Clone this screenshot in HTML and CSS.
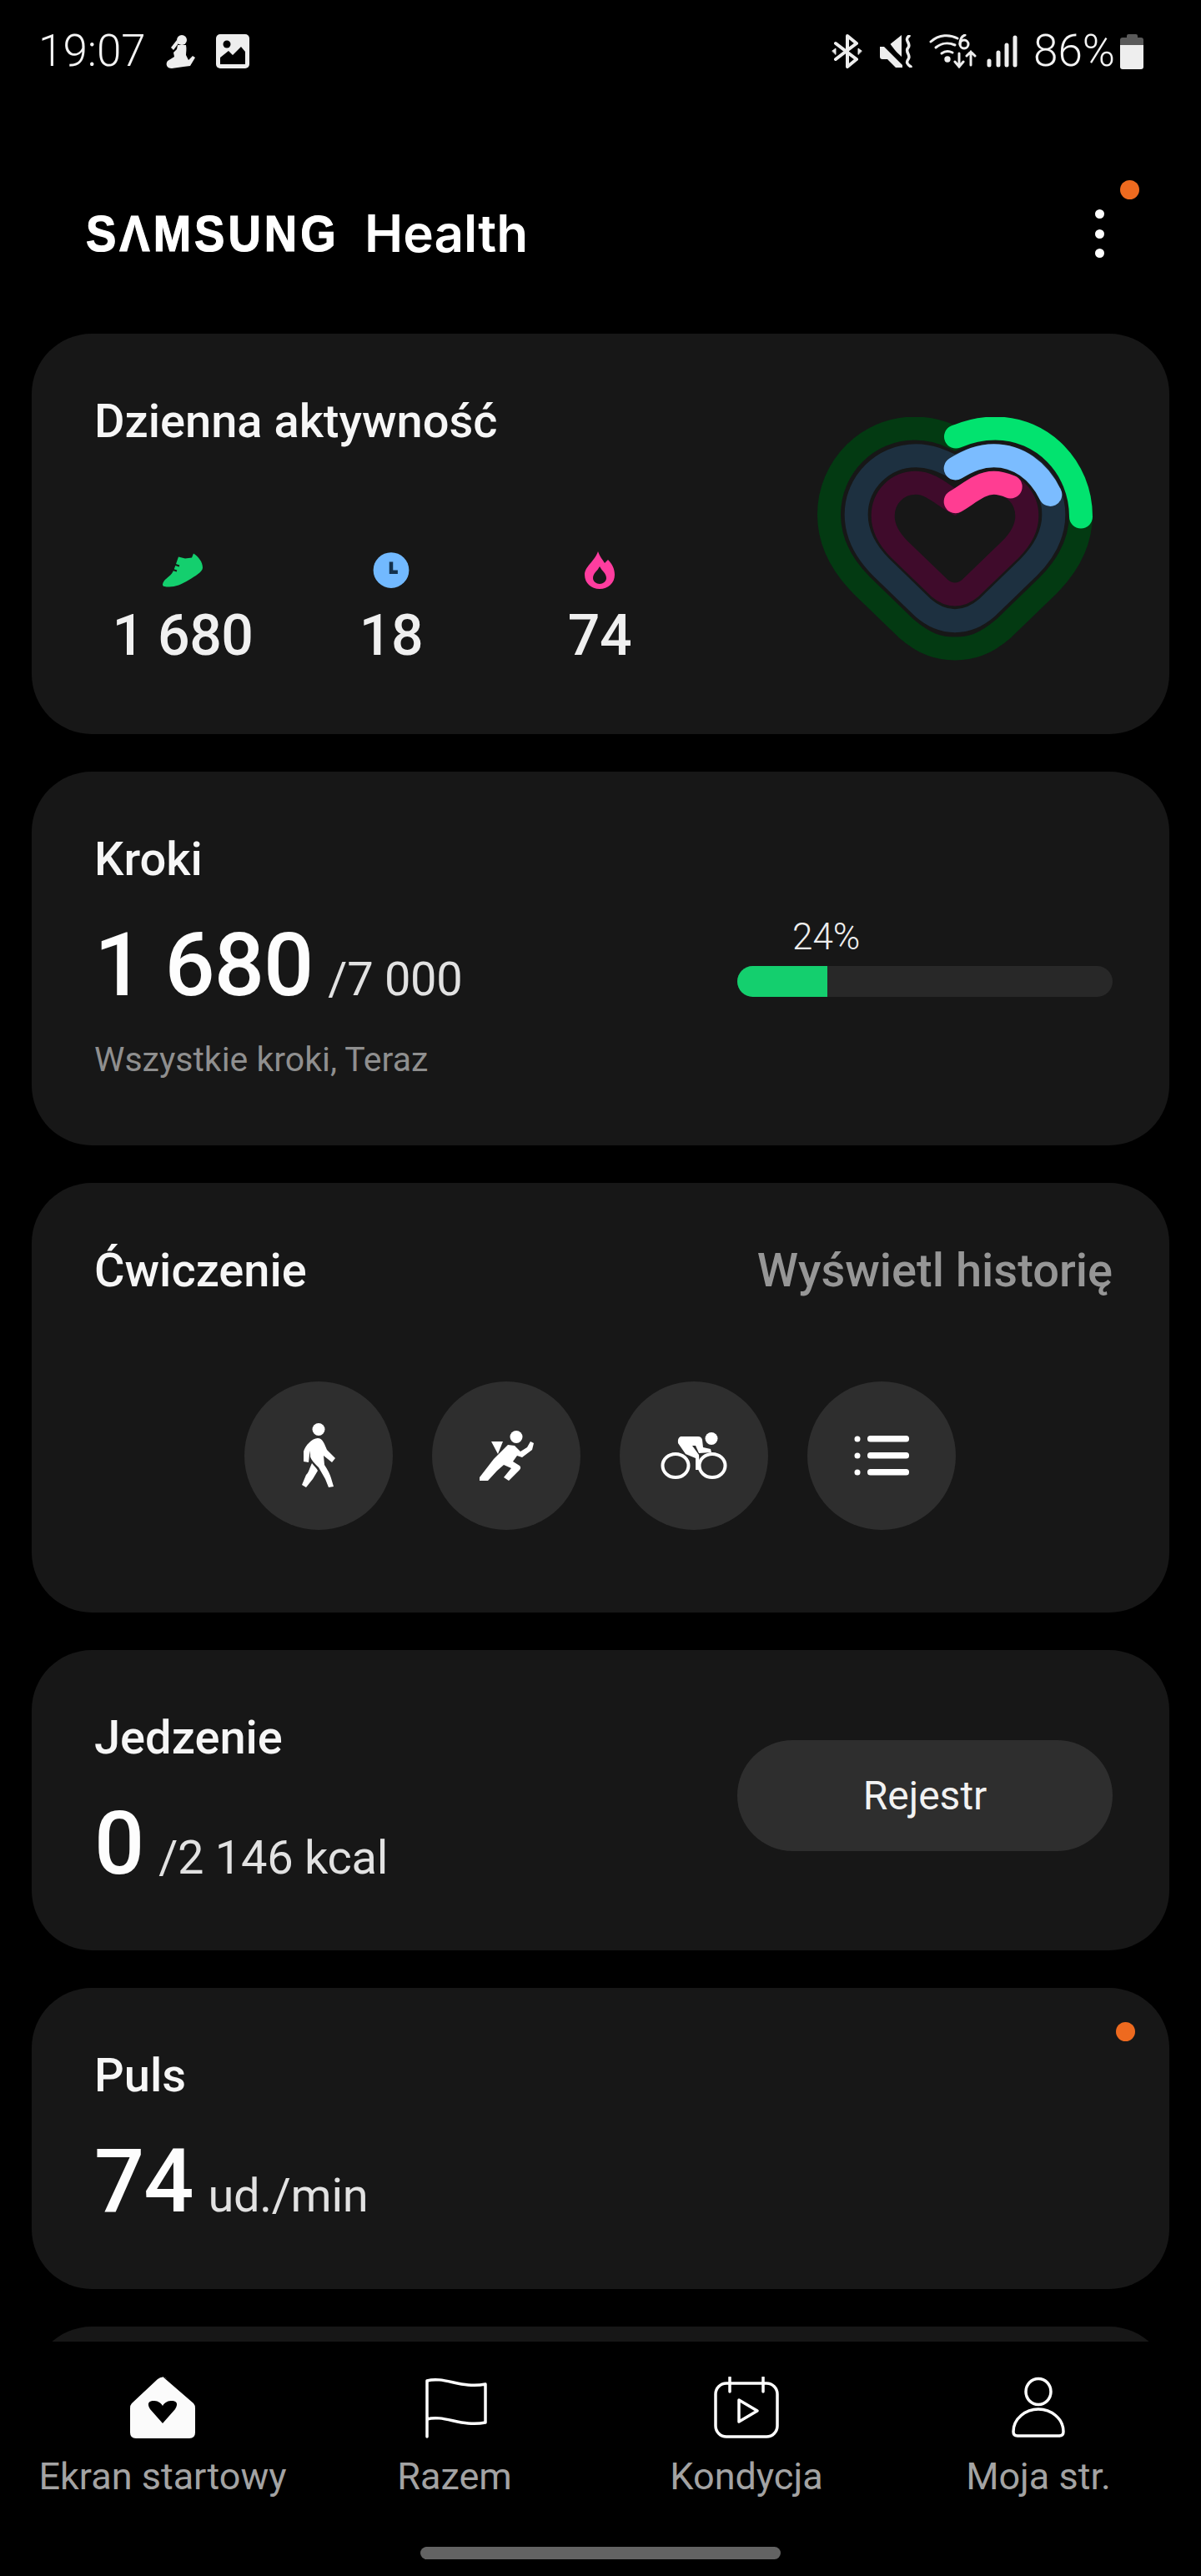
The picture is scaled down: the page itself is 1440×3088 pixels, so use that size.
FILE: index.html
```html
<html>
<head>
<meta charset="utf-8">
<link rel="stylesheet" href="styles.css">
</head>
<body>
<div id="ekran">
    <div class="status">
        <div class="status-lewa">
            <span class="czas">19:07</span>
            <svg class="st-figura" viewBox="0 0 37 41"><circle cx="20" cy="7" r="6" fill="#eee"/><path d="M15 13 L25 13 C26 18 25 21 25 25 L28 31 L33 26 L36 28 L30 38 L22 39 L8 41 C2 41 0 36 3 32 L11 27 L10 22 L14 18Z" fill="#eee"/><path d="M14 7 L7 16 L10 19 L16 11Z" fill="#eee"/></svg>
            <svg class="st-obraz" viewBox="0 0 40 41"><rect width="40" height="41" rx="5" fill="#eee"/><path d="M5 36 V28 L15 20 L20 25 L30 15 L35 21 V36Z" fill="#000"/><circle cx="13" cy="12" r="4.5" fill="#000"/></svg>
        </div>
        <div class="status-prawa">
            <svg class="st-bt" viewBox="0 0 37 43" fill="none" stroke="#eee" stroke-width="4" stroke-linejoin="round" stroke-linecap="round"><path d="M5 12 L30 31 L19 40 V3 L30 12 L5 31"/><path d="M1 21 L5 18 V25Z M36 21 L32 18 V25Z" fill="#eee" stroke-width="1"/></svg>
            <svg class="st-mute" viewBox="0 0 39 39"><path d="M0 14 H5 L27 36 V39 L19 39 L9 29 H3 Q0 29 0 26Z M11 12 L26 0 V26Z" fill="#eee"/><path d="M3 1 L29 35" stroke="#000" stroke-width="3"/><path d="M35 1 C28 6 38 10 34 15 C29 20 38 24 34 29 C31 33 33 35 37 38" fill="none" stroke="#eee" stroke-width="3.5" stroke-linecap="round"/></svg>
            <svg class="st-wifi" viewBox="0 0 57 41" fill="none" stroke="#eee" stroke-width="3" stroke-linecap="round"><path d="M2 9 C12 0 25 0 34 5"/><path d="M8 16 C15 10 24 10 31 13"/><path d="M15 23 C19 20 24 20 28 22"/><circle cx="22" cy="30" r="2.2" fill="#eee"/><circle cx="42" cy="12" r="5"/><path d="M37 12 C37 5 40 2 43 1"/><path d="M36 23 V39 M31 33 L36 39 L41 33"/><path d="M50 37 V21 M45 26 L50 21 L55 26"/></svg>
            <svg class="st-zasieg" viewBox="0 0 37 39" stroke="#eee" stroke-width="5" stroke-linecap="round"><path d="M3 36 V31"/><path d="M14 36 V21"/><path d="M24 36 V12" /><path d="M34 36 V3"/></svg>
            <span class="procent">86%</span>
            <div class="bateria"><div class="bateria-kap"></div><div class="bateria-gora"></div><div class="bateria-dol"></div></div>
        </div>
    </div>

    <div class="naglowek">
        <div class="logo"><span class="logo-marka">SΛMSUNG</span><span class="logo-app">Health</span></div>
        <div class="menu"><i></i><i></i><i></i><b class="kropka kropka-menu"></b></div>
    </div>

    <div class="lista">
        <div class="karta karta-aktywnosc">
            <div class="aktywnosc-lewa">
                <div class="tytul">Dzienna aktywność</div>
                <div class="staty">
                    <div class="stat">
                        <svg class="ikona-stat" viewBox="0 0 50 40"><path d="M1 37 C2 31 8 29 12 24 C15 20 17 12 20 4 L28 6 L36 5 L38 0 C44 4 49 10 49 17 C49 22 40 27 32 32 C24 37 16 40 9 40 C4 40 1 40 1 37Z" fill="#14cf6e"/><path d="M15 13 L21 15 M12 19 L18 21" stroke="#181818" stroke-width="2"/></svg>
                        <div class="liczba">1 680</div>
                    </div>
                    <div class="stat">
                        <svg class="ikona-stat" viewBox="0 0 38 40"><circle cx="19" cy="20" r="19" fill="#72b9ff"/><path d="M19 11 V22 H26" fill="none" stroke="#12304d" stroke-width="4"/></svg>
                        <div class="liczba">18</div>
                    </div>
                    <div class="stat">
                        <svg class="ikona-stat" viewBox="0 0 36 45"><path d="M16 0 C18 6 21 9 24 14 L28 10 C33 15 36 21 36 28 C36 38 28 45 18 45 C8 45 0 38 0 28 C0 18 12 12 16 0Z" fill="#ff3d9f"/><path d="M18 18 C21 24 26 26 26 32 C26 36 22 39 18 39 C14 39 10 36 10 32 C10 26 15 24 18 18Z" fill="#181818"/></svg>
                        <div class="liczba">74</div>
                    </div>
                </div>
            </div>
            <svg class="serce" viewBox="120 90 990 875" fill="none" stroke-width="84" stroke-linecap="round">
                <!-- pierscienie: tlo i postep -->
                <path stroke="#033a12" d="M615 165 C665 140 710 130 760 130 C930 130 1068 270 1068 440 C1068 545 1015 630 950 695 L790 850 C720 910 670 922 615 922 C560 922 510 910 440 850 L280 695 C215 630 162 545 162 440 C162 270 300 130 470 130 C520 130 565 140 615 165Z"/>
                <path stroke="#1d3040" d="M615 270 C665 245 705 228 755 228 C875 228 970 325 970 440 C970 515 935 575 880 630 L730 775 C690 810 655 822 615 822 C575 822 540 810 500 775 L350 630 C295 575 260 515 260 440 C260 325 355 228 475 228 C525 228 565 245 615 270Z"/>
                <path stroke="#3f0b2b" d="M615 395 C665 365 705 326 755 326 C825 326 874 380 874 445 C874 490 850 530 815 565 L670 705 C650 722 635 727 615 727 C595 727 580 722 560 705 L415 565 C380 530 356 490 356 445 C356 380 405 326 475 326 C525 326 565 365 615 395Z"/>
                <path stroke="#02e36f" d="M618 160 C665 140 710 130 760 130 C930 130 1068 270 1068 448"/>
                <path stroke="#7bbcff" d="M617 274 C665 245 705 228 755 228 C840 228 915 280 958 368"/>
                <path stroke="#ff3d92" d="M617 393 C665 365 705 326 755 326 C775 326 795 332 815 340"/>
            </svg>
        </div>

        <div class="karta karta-kroki">
            <div>
                <div class="tytul">Kroki</div>
                <div class="wiersz"><span class="duza">1 680</span><span class="cel">/7 000</span></div>
                <div class="opis">Wszystkie kroki, Teraz</div>
            </div>
            <div class="postep">
                <div class="postep-proc">24%</div>
                <div class="postep-tor"><div class="postep-pasek" style="width: 24%"></div></div>
            </div>
        </div>

        <div class="karta karta-cwiczenie">
            <div class="cwiczenie-gora">
                <div class="tytul">Ćwiczenie</div>
                <div class="historia">Wyświetl historię</div>
            </div>
            <div class="kolka">
                <div class="kolko">
                    <svg class="ik-chod" viewBox="0 0 40 78" fill="#fff"><circle cx="20" cy="7.5" r="7.5"/><path d="M19 18 C23 18 25 21 27 25 L30 32 L40 42 L36 47 L26 39 L27 50 C31 56 34 62 35 66 L38 76 L32 77 L28 67 L20 53 C15 48 11 44 10 40 L10 33 L9 38 L8 47 L2 46 L2 34 C4 27 12 18 19 18Z"/><path d="M12 48 C15 52 18 54 19 57 L13 67 L5 77 L0 74 L5 62 C8 60 9 54 12 48Z"/></svg>
                </div>
                <div class="kolko">
                    <svg class="ik-bieg" viewBox="0 0 67 60" fill="#fff"><circle cx="45" cy="7.5" r="7.5"/><path d="M15 13 L29 13 L23 28Z"/><path d="M35 17 L43 18 L50 25 L58 20 L62 13 L66 15 L64 23 L52 32 L46 30 L41 37 L49 42 C51 44 50 46 49 47 L36 60 L30 56 L39 45 L30 41 L22 48 L11 60 L1 60 L1 56 L18 34Z"/></svg>
                </div>
                <div class="kolko">
                    <svg class="ik-rower" viewBox="0 0 80 56"><circle cx="61" cy="7.5" r="7.5" fill="#fff"/><path d="M24 5 H45 Q49 5 50 9 L51 18 L60 20 L61 24 L46 25 L42 16 H38 L46 27 L47 45 L42 45 L42 31 L30 26 L21 13 Q20 7 24 5Z" fill="#fff"/><g fill="none" stroke="#fff" stroke-width="4"><ellipse cx="18" cy="40" rx="15.5" ry="14"/><ellipse cx="62" cy="40" rx="15.5" ry="14"/></g></svg>
                </div>
                <div class="kolko">
                    <svg class="ik-lista" viewBox="0 0 66 48" fill="#fff"><circle cx="4" cy="4" r="3.5"/><rect x="16" y="0" width="50" height="7.5" rx="3.5"/><circle cx="4" cy="24" r="3.5"/><rect x="16" y="20" width="50" height="7.5" rx="3.5"/><circle cx="4" cy="44" r="3.5"/><rect x="16" y="40" width="50" height="7.5" rx="3.5"/></svg>
                </div>
            </div>
        </div>

        <div class="karta karta-jedzenie">
            <div>
                <div class="tytul">Jedzenie</div>
                <div class="wiersz"><span class="duza">0</span><span class="cel">/2 146 kcal</span></div>
            </div>
            <div class="rejestr">Rejestr</div>
        </div>

        <div class="karta karta-puls">
            <div class="tytul">Puls</div>
            <div class="wiersz"><span class="duza">74</span><span class="cel">ud./min</span></div>
            <b class="kropka kropka-puls"></b>
        </div>

        <div class="karta karta-nastepna"></div>
    </div>

    <div class="nawigacja">
        <div class="zakladka">
            <svg class="ikona-nav" viewBox="0 0 78 74"><path d="M39 0 L76 32 Q78 34 78 38 V67 Q78 74 71 74 H7 Q0 74 0 67 V38 Q0 34 2 32 L33 3 Q39 -2 45 3Z" fill="#fbfbfb"/><path d="M39 56 L24 39 C19 31 24 29 28 29 C32 29 36 30 39 35 C42 30 46 29 50 29 C54 29 59 31 54 39Z" fill="#000"/></svg>
            <div class="zakladka-tekst">Ekran startowy</div>
        </div>
        <div class="zakladka">
            <svg class="ikona-nav" viewBox="0 0 78 74" fill="none" stroke="#fff" stroke-width="3.5" stroke-linecap="round" stroke-linejoin="round"><path d="M6 72 V5 C26 -1 48 15 76 9 V55 C48 61 26 45 6 51"/></svg>
            <div class="zakladka-tekst">Razem</div>
        </div>
        <div class="zakladka">
            <svg class="ikona-nav" viewBox="0 0 78 74" fill="none" stroke="#fff" stroke-width="3.5" stroke-linecap="round" stroke-linejoin="round"><rect x="2" y="8" width="74" height="64" rx="13"/><path d="M19 1 V18 M59 1 V18"/><path d="M30 28 L52 41 L30 54Z"/></svg>
            <div class="zakladka-tekst">Kondycja</div>
        </div>
        <div class="zakladka">
            <svg class="ikona-nav" viewBox="0 0 78 74" fill="none" stroke="#fff" stroke-width="3.5" stroke-linecap="round" stroke-linejoin="round"><ellipse cx="39" cy="18" rx="15" ry="15.5"/><path d="M9 66 C9 50 24 39 39 39 C54 39 69 50 69 66 Q69 71 64 71 H14 Q9 71 9 66Z"/></svg>
            <div class="zakladka-tekst">Moja str.</div>
        </div>
    </div>
    <div class="pasek-dolny"></div>
</div>
</body>
</html>
```

FILE: styles.css
```css
* {
    box-sizing: border-box;
}

html, body {
    margin: 0;
    padding: 0;
    background-color: #000;
}

body {
    font-family: Roboto, "Liberation Sans", sans-serif;
    color: #f2f2f2;
}

#ekran {
    width: 1440px;
    height: 3088px;
    display: flex;
    flex-direction: column;
    overflow: hidden;
}

/* pasek statusu */
.status {
    height: 124px;
    padding: 40px 69px 0 46px;
    display: flex;
    justify-content: space-between;
    align-items: flex-start;
}

.status-lewa, .status-prawa {
    display: flex;
    align-items: center;
    height: 43px;
}

.czas {
    font-size: 53px;
    font-weight: 300;
    line-height: 43px;
    color: #f4f4f4;
    width: 152px;
}

.st-figura { width: 37px; height: 41px; }
.st-obraz { width: 40px; height: 41px; margin-left: 24px; }
.st-bt { width: 37px; height: 43px; }
.st-mute { width: 39px; height: 39px; margin-left: 21px; }
.st-wifi { width: 57px; height: 41px; margin-left: 20px; }
.st-zasieg { width: 37px; height: 39px; margin-left: 12px; }

.procent {
    font-size: 53px;
    font-weight: 300;
    line-height: 43px;
    color: #f4f4f4;
    margin-left: 19px;
    width: 104px;
    white-space: nowrap;
}

.bateria {
    width: 28px;
    height: 42px;
    display: flex;
    flex-direction: column;
    align-items: center;
}

.bateria-kap {
    width: 13px;
    height: 4px;
    background-color: #5a5a5a;
    border-radius: 2px 2px 0 0;
}

.bateria-gora {
    width: 28px;
    height: 9px;
    background-color: #5a5a5a;
    border-radius: 3px 3px 0 0;
}

.bateria-dol {
    width: 28px;
    flex: 1;
    background-color: #eee;
    border-radius: 0 0 3px 3px;
}

/* naglowek z logo */
.naglowek {
    height: 276px;
    padding: 36px 116px 0 103px;
    display: flex;
    justify-content: space-between;
    align-items: center;
}

.logo {
    display: flex;
    align-items: center;
}

.logo-marka {
    font-family: "Liberation Sans", sans-serif;
    font-weight: 700;
    font-size: 62px;
    line-height: 60px;
    letter-spacing: 4.5px;
    -webkit-text-stroke: 1.2px #fff;
    color: #fff;
    width: 334px;
    display: inline-block;
    white-space: nowrap;
    transform-origin: left center;
    transform: scaleX(0.88);
}

.logo-app {
    font-family: Inter, sans-serif;
    font-weight: 600;
    font-size: 62px;
    line-height: 60px;
    color: #fff;
}

.menu {
    display: flex;
    flex-direction: column;
    gap: 12.5px;
    position: relative;
}

.menu i {
    display: block;
    width: 11px;
    height: 11px;
    border-radius: 50%;
    background-color: #fff;
}

.kropka {
    position: absolute;
    border-radius: 50%;
    background-color: #ee6a1f;
    width: 23px;
    height: 23px;
}

.kropka-menu {
    left: 30px;
    top: -35px;
}

.kropka-puls {
    right: 41px;
    top: 41px;
}

/* karty */
.lista {
    height: 2407px;
    flex: none;
    padding: 0 38px;
    display: flex;
    flex-direction: column;
    gap: 45px;
    overflow: hidden;
}

.karta {
    background-color: #171717;
    border-radius: 72px;
    flex: none;
    position: relative;
}

.tytul {
    font-size: 56px;
    font-weight: 500;
    line-height: 60px;
    color: #f6f6f6;
    white-space: nowrap;
}

.karta-aktywnosc {
    height: 480px;
    padding: 75px 92px 0 75px;
    display: flex;
    justify-content: space-between;
}

.staty {
    display: flex;
    margin-top: 126px;
    margin-left: -19px;
}

.stat {
    width: 250px;
    display: flex;
    flex-direction: column;
    align-items: center;
}

.ikona-stat {
    height: 45px;
    width: 50px;
}

.liczba {
    font-size: 68px;
    font-weight: 500;
    line-height: 70px;
    margin-top: 21px;
    letter-spacing: -0.5px;
    color: #f0f0f0;
}

.serce {
    width: 330px;
    height: 292px;
    margin-top: 25px;
}

.karta-kroki {
    height: 448px;
    padding: 75px 68px 0 75px;
    display: flex;
    justify-content: space-between;
}

.wiersz {
    display: flex;
    align-items: baseline;
    margin-top: 37px;
}

.duza {
    font-size: 106px;
    font-weight: 500;
    line-height: 120px;
    letter-spacing: -1px;
    color: #fdfdfd;
}

.cel {
    font-size: 56px;
    line-height: 60px;
    letter-spacing: -0.3px;
    color: #e2e2e2;
    margin-left: 18px;
}

.opis {
    font-size: 41px;
    line-height: 48px;
    color: #8f8f8f;
    margin-top: 29px;
}

.postep {
    width: 450px;
    margin-top: 98px;
}

.postep-proc {
    font-size: 44px;
    font-weight: 300;
    line-height: 50px;
    color: #eee;
    padding-left: 66px;
}

.postep-tor {
    height: 37px;
    margin-top: 10px;
    background-color: #282828;
    border-radius: 19px;
    overflow: hidden;
}

.postep-pasek {
    height: 100%;
    background-color: #14cf6e;
}

.karta-cwiczenie {
    height: 515px;
    padding: 75px 68px 0 75px;
}

.cwiczenie-gora {
    display: flex;
    justify-content: space-between;
}

.historia {
    font-size: 56px;
    font-weight: 500;
    line-height: 60px;
    color: #969696;
    white-space: nowrap;
}

.kolka {
    display: flex;
    justify-content: center;
    gap: 47px;
    margin-top: 103px;
    margin-left: -8px;
}

.kolko {
    width: 178px;
    height: 178px;
    border-radius: 50%;
    background-color: #2e2e2e;
    display: flex;
    align-items: center;
    justify-content: center;
}

.ik-chod { width: 40px; height: 78px; }
.ik-bieg { width: 67px; height: 60px; }
.ik-rower { width: 80px; height: 56px; }
.ik-lista { width: 66px; height: 48px; }

.karta-jedzenie {
    height: 360px;
    padding: 75px 68px 0 75px;
    display: flex;
    justify-content: space-between;
}

.rejestr {
    width: 450px;
    height: 133px;
    margin-top: 33px;
    border-radius: 67px;
    background-color: #2e2e2e;
    display: flex;
    align-items: center;
    justify-content: center;
    font-size: 48px;
    color: #f2f2f2;
}

.karta-puls {
    height: 361px;
    padding: 75px 68px 0 75px;
}

.karta-nastepna {
    height: 200px;
}

/* dolna nawigacja */
.nawigacja {
    padding: 42px 20px 0;
    display: flex;
    height: 246px;
    flex: none;
}

.zakladka {
    width: 350px;
    display: flex;
    flex-direction: column;
    align-items: center;
}

.ikona-nav {
    width: 78px;
    height: 74px;
}

.zakladka-tekst {
    font-size: 45px;
    line-height: 52px;
    margin-top: 20px;
    color: #a3a3a3;
    white-space: nowrap;
}

.pasek-dolny {
    width: 432px;
    height: 15px;
    margin: 0 auto;
    border-radius: 8px;
    background-color: #636363;
}
```
